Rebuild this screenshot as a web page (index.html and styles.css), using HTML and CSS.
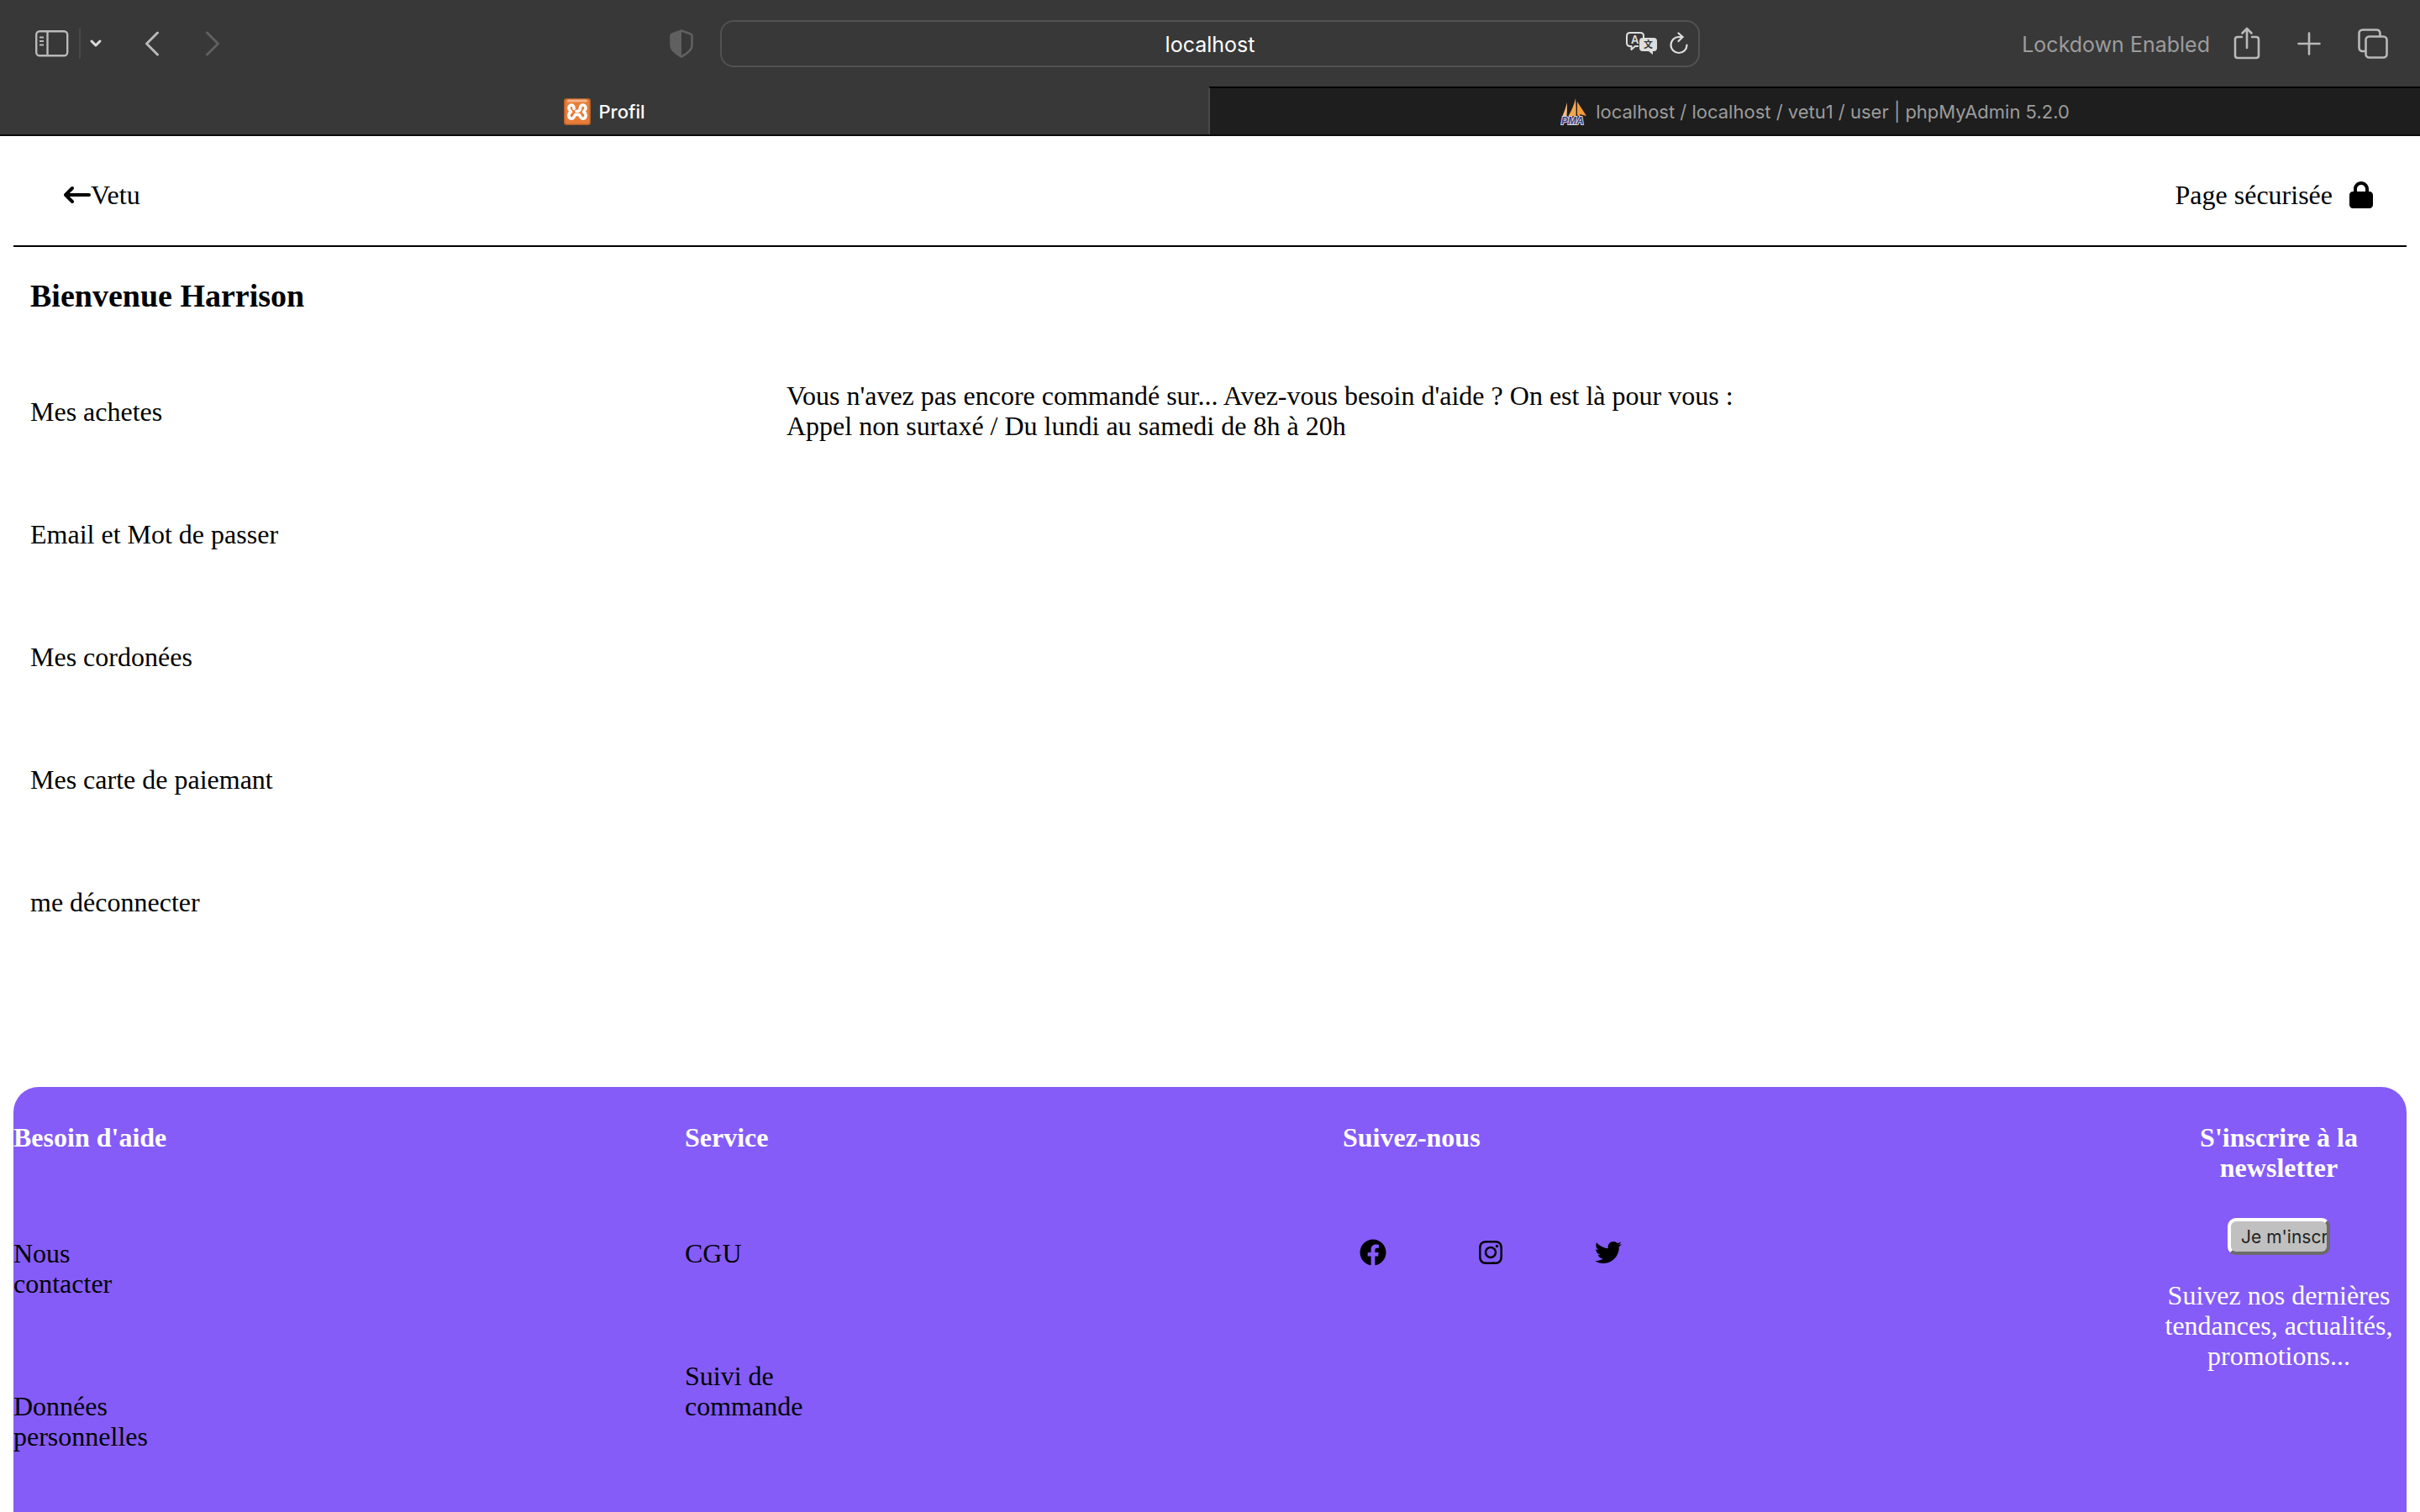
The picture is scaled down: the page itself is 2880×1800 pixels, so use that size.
FILE: index.html
```html
<!DOCTYPE html>
<html lang="fr">
<head>
<meta charset="utf-8">
<title>Profil</title>
<link rel="stylesheet" href="styles.css">
</head>
<body>
<div class="browser">
  <div class="toolbar">
    <div class="tools-left">
      <button class="tool" aria-label="Barre latérale"><svg width="40" height="32" viewBox="0 0 40 32" fill="none" stroke="#b9b9b9" stroke-width="2.4"><rect x="1.2" y="1.2" width="37" height="29" rx="4"/><path d="M14.5 1v30"/><path d="M5 8.500h5M5 13h5M5 17.500h5" stroke-width="2"/></svg></button>
      <span class="divider"></span>
      <button class="tool tool-menu" aria-label="Groupes d'onglets"><svg width="16" height="12" viewBox="0 0 16 12" fill="none" stroke="#dcdcdc" stroke-width="3" stroke-linecap="round" stroke-linejoin="round"><path d="M3 3l5 5 5-5"/></svg></button>
      <button class="tool tool-back" aria-label="Précédent"><svg width="18" height="30" viewBox="0 0 18 30" fill="none" stroke="#b9b9b9" stroke-width="3" stroke-linecap="round" stroke-linejoin="round"><path d="M15.500 2L2.500 15l13 13"/></svg></button>
      <button class="tool tool-next" aria-label="Suivant"><svg width="18" height="30" viewBox="0 0 18 30" fill="none" stroke="#606060" stroke-width="3" stroke-linecap="round" stroke-linejoin="round"><path d="M2.500 2l13 13-13 13"/></svg></button>
      <button class="tool tool-shield" aria-label="Confidentialité"><svg width="28" height="34" viewBox="0 0 28 34"><path d="M14 1.500L3 5.500Q1.500 6 1.500 8v11c0 5 5 9.500 12.500 13.500C21.500 28.500 26.500 24 26.500 19V8q0-2-1.500-2.500z" fill="none" stroke="#606060" stroke-width="2.600" stroke-linejoin="round"/><path d="M14 1L3 5Q1 6 1 8v11c0 5 5 10 13 14z" fill="#606060"/></svg></button>
    </div>
    <div class="address">
      <input class="address-input" type="text" value="localhost" aria-label="Adresse">
      <button class="tool" aria-label="Traduire"><svg width="38" height="28" viewBox="0 0 38 28"><path d="M15 17h-4l-4.500 4v-4H5q-4 0-4-4V5q0-4 4-4h12q4 0 4 4v2" fill="none" stroke="#dedede" stroke-width="2" stroke-linejoin="round"/><path d="M20 7h13q4 0 4 4v8q0 4-4 4h-1v4l-5-4h-7q-4 0-4-4v-8q0-4 4-4z" fill="#dedede"/><text class="glyph-latin" x="6" y="14">A</text><text class="glyph-han" x="21" y="19">文</text></svg></button>
      <button class="tool" aria-label="Actualiser"><svg width="22" height="28" viewBox="0 0 22 28" fill="none" stroke="#dedede" stroke-width="2.200" stroke-linecap="round" stroke-linejoin="round"><path d="M20.500 15.500A9.500 9.500 0 1 1 11 6h4.500"/><path d="M10.500 1.500l5 4.500-5 5"/></svg></button>
    </div>
    <div class="tools-right">
      <span class="lockdown">Lockdown Enabled</span>
      <button class="tool" aria-label="Partager"><svg width="32" height="40" viewBox="0 0 32 40" fill="none" stroke="#b9b9b9" stroke-width="2.600" stroke-linecap="round" stroke-linejoin="round"><path d="M10 12H5q-3 0-3 3v19q0 3 3 3h22q3 0 3-3V15q0-3-3-3h-5"/><path d="M16 25V3M10.500 7.500L16 2l5.500 5.500"/></svg></button>
      <button class="tool" aria-label="Nouvel onglet"><svg width="28" height="28" viewBox="0 0 28 28" fill="none" stroke="#b9b9b9" stroke-width="2.600" stroke-linecap="round"><path d="M14 1.500v25M1.500 14h25"/></svg></button>
      <button class="tool" aria-label="Tous les onglets"><svg width="36" height="36" viewBox="0 0 36 36" fill="none" stroke="#b9b9b9" stroke-width="2.600"><rect x="9.500" y="9.500" width="25" height="25" rx="4"/><path d="M9 27H6q-4.500 0-4.500-4.500V6Q1.500 1.500 6 1.500h16q4.500 0 4.500 4.500v3"/></svg></button>
    </div>
  </div>
  <div class="tabs">
    <a class="tab tab-active" href="#profil">
      <svg width="32" height="32" viewBox="0 0 32 32"><rect width="32" height="32" rx="3" fill="#b4602a"/><rect x="1.500" y="1.500" width="29" height="29" rx="2" fill="#e97d38"/><rect x="4" y="1.500" width="24" height="3" rx="1.500" fill="#f3b48a"/><path d="M12 12.500C12.500 6.500 5.500 7 6 12c.3 2.500 2 3 2.500 4.200C5 18 5 24 9 24.200c3.500 0 3.500-4.200 5-4.700h4c1.500.5 1.500 4.700 5 4.700 4-.2 4-6.200.5-8 .5-1.200 2.200-1.700 2.500-4.200.5-5-6.500-5.500-6.500-.5 0 2.500-1 4-4.500 4" fill="none" stroke="#fff" stroke-width="3.600" stroke-linecap="round" stroke-linejoin="round"/></svg>
      <span>Profil</span>
    </a>
    <a class="tab" href="#phpmyadmin">
      <svg width="32" height="32" viewBox="0 0 32 32"><path d="M8 5Q8 15 7.500 21H2.500Q6 13 8 5z" fill="#f6bd7d"/><path d="M18 0Q19 12 18.500 21H9.500Q16 10 18 0z" fill="#f3a750"/><path d="M20 4L31 21 23 19 24 23 20 20z" fill="#f39a3a"/><text class="glyph-pma" x="1" y="31">PMA</text></svg>
      <span>localhost / localhost / vetu1 / user | phpMyAdmin 5.2.0</span>
    </a>
  </div>
</div>

<div class="page">
  <header class="header">
    <a class="home" href="#vetu"><svg width="32" height="32" viewBox="0 0 512 512"><path d="M9.400 233.400c-12.500 12.500-12.500 32.800 0 45.300l128 128c12.500 12.500 32.800 12.500 45.300 0s12.500-32.800 0-45.300L109.300 288H480c17.700 0 32-14.300 32-32s-14.300-32-32-32H109.300l73.400-73.400c12.500-12.500 12.500-32.800 0-45.300s-32.800-12.500-45.300 0l-128 128z"/></svg>Vetu</a>
    <div class="secure">Page sécurisée<svg width="28" height="32" viewBox="0 0 448 512"><path d="M144 144v48H304V144c0-44.200-35.800-80-80-80s-80 35.800-80 80zM80 192V144C80 64.500 144.500 0 224 0s144 64.500 144 144v48h16c35.300 0 64 28.700 64 64V448c0 35.300-28.700 64-64 64H64c-35.300 0-64-28.700-64-64V256c0-35.300 28.700-64 64-64H80z"/></svg></div>
  </header>

  <main class="main">
    <h2 class="welcome">Bienvenue Harrison</h2>
    <div class="account">
      <nav>
        <ul class="links">
          <li><a href="#achats">Mes achetes</a></li>
          <li><a href="#email">Email et Mot de passer</a></li>
          <li><a href="#coordonnees">Mes cordonées</a></li>
          <li><a href="#cartes">Mes carte de paiemant</a></li>
          <li><a href="#deconnexion">me déconnecter</a></li>
        </ul>
      </nav>
      <p class="notice">Vous n'avez pas encore commandé sur... Avez-vous besoin d'aide ? On est là pour vous : Appel non surtaxé / Du lundi au samedi de 8h à 20h</p>
    </div>
  </main>

  <footer class="footer">
    <section>
      <h4 class="footer-title">Besoin d'aide</h4>
      <ul class="links footer-links">
        <li><a href="#contact">Nous contacter</a></li>
        <li><a href="#donnees">Données personnelles</a></li>
      </ul>
    </section>
    <section>
      <h4 class="footer-title">Service</h4>
      <ul class="links footer-links">
        <li><a href="#cgu">CGU</a></li>
        <li><a href="#suivi">Suivi de commande</a></li>
      </ul>
    </section>
    <section>
      <h4 class="footer-title">Suivez-nous</h4>
      <div class="social">
        <a href="#facebook" aria-label="Facebook"><svg width="32" height="32" viewBox="0 0 512 512"><path d="M504 256C504 119 393 8 256 8S8 119 8 256c0 123.780 90.690 226.380 209.250 245V327.690h-63V256h63v-54.640c0-62.150 37-96.480 93.670-96.480 27.140 0 55.520 4.840 55.520 4.840v61h-31.280c-30.800 0-40.410 19.120-40.410 38.730V256h68.780l-11 71.690h-57.780V501C413.310 482.380 504 379.780 504 256z"/></svg></a>
        <a href="#instagram" aria-label="Instagram"><svg width="28" height="32" viewBox="0 0 448 512"><path d="M224.100 141c-63.600 0-114.900 51.300-114.900 114.900s51.300 114.900 114.900 114.900S339 319.500 339 255.900 287.700 141 224.100 141zm0 189.600c-41.100 0-74.700-33.500-74.700-74.700s33.500-74.700 74.700-74.700 74.700 33.500 74.700 74.700-33.600 74.700-74.700 74.700zm146.400-194.300c0 14.900-12 26.800-26.800 26.800-14.900 0-26.800-12-26.800-26.800s12-26.800 26.800-26.800 26.800 12 26.800 26.800zm76.100 27.200c-1.700-35.900-9.900-67.700-36.200-93.900-26.200-26.200-58-34.400-93.900-36.200-37-2.100-147.900-2.100-184.900 0-35.800 1.700-67.600 9.900-93.900 36.100s-34.400 58-36.200 93.900c-2.100 37-2.100 147.900 0 184.900 1.700 35.900 9.900 67.700 36.200 93.900s58 34.400 93.900 36.200c37 2.100 147.900 2.100 184.900 0 35.900-1.700 67.700-9.900 93.900-36.200 26.200-26.200 34.400-58 36.200-93.900 2.100-37 2.100-147.800 0-184.800zM398.800 388c-7.800 19.600-22.900 34.700-42.600 42.600-29.500 11.700-99.500 9-132.100 9s-102.700 2.600-132.100-9c-19.600-7.800-34.700-22.900-42.600-42.600-11.700-29.500-9-99.500-9-132.100s-2.600-102.700 9-132.100c7.800-19.600 22.900-34.700 42.600-42.600 29.500-11.700 99.500-9 132.100-9s102.700-2.600 132.100 9c19.600 7.800 34.700 22.900 42.600 42.600 11.700 29.500 9 99.500 9 132.100s2.700 102.700-9 132.100z"/></svg></a>
        <a href="#twitter" aria-label="Twitter"><svg width="32" height="32" viewBox="0 0 512 512"><path d="M459.370 151.716c.325 4.548.325 9.097.325 13.645 0 138.720-105.583 298.558-298.558 298.558-59.452 0-114.680-17.219-161.137-47.106 8.447.974 16.568 1.299 25.340 1.299 49.055 0 94.213-16.568 130.274-44.832-46.132-.975-84.792-31.188-98.112-72.772 6.498.974 12.995 1.624 19.818 1.624 9.421 0 18.843-1.300 27.614-3.573-48.081-9.747-84.143-51.980-84.143-102.985v-1.299c13.969 7.797 30.214 12.670 47.431 13.319-28.264-18.843-46.781-51.005-46.781-87.391 0-19.492 5.197-37.360 14.294-52.954 51.655 63.675 129.300 105.258 216.365 109.807-1.624-7.797-2.599-15.918-2.599-24.040 0-57.828 46.782-104.934 104.934-104.934 30.213 0 57.502 12.670 76.670 33.137 23.715-4.548 46.456-13.320 66.599-25.340-7.798 24.366-24.366 44.833-46.132 57.827 21.117-2.273 41.584-8.122 60.426-16.243-14.292 20.791-32.161 39.308-52.628 54.253z"/></svg></a>
      </div>
    </section>
    <section class="newsletter">
      <h4 class="footer-title">S'inscrire à la newsletter</h4>
      <input class="subscribe" type="text" value="Je m'inscrire" aria-label="Newsletter">
      <p class="pitch">Suivez nos dernières tendances, actualités, promotions...</p>
    </section>
  </footer>
</div>
</body>
</html>
```
FILE: styles.css
```css
* {
  box-sizing: border-box;
}

body {
  margin: 0;
  min-height: 100vh;
  display: flex;
  flex-direction: column;
  background: #fff;
  color: #000;
  font: 32px/36px "Liberation Serif", "Times New Roman", serif;
}

h2, h4, p, ul {
  margin: 0;
  padding: 0;
}

svg {
  display: block;
  flex: none;
}

a {
  color: inherit;
  text-decoration: none;
}

/* Browser chrome */
.browser {
  background: #383838;
  border-bottom: 2px solid #0a0a0a;
  font-family: Inter, "Liberation Sans", sans-serif;
}

.toolbar {
  display: grid;
  grid-template-columns: 857fr 1166fr 857fr;
  align-items: center;
  height: 103px;
}

.tool {
  padding: 0;
  border: 0;
  background: none;
}

.tools-left {
  display: flex;
  align-items: center;
  padding: 0 32px 0 42px;
}

.divider {
  width: 2px;
  height: 36px;
  margin: 0 10px 0 12px;
  background: #484848;
}

.tool-back {
  margin-left: 50px;
}

.tool-next {
  margin-left: 54px;
}

.tool-shield {
  margin-left: auto;
}

.address {
  display: flex;
  align-items: center;
  gap: 14px;
  height: 56px;
  padding: 0 12px 0 100px;
  border: 2px solid #525252;
  border-radius: 16px;
}

.address-input {
  flex: 1;
  min-width: 0;
  padding: 2px 0 0;
  border: 0;
  background: none;
  color: #fff;
  font: 25px/32px Inter, "Liberation Sans", sans-serif;
  text-align: center;
}

.glyph-latin {
  fill: #dedede;
  font: 600 13px Inter, sans-serif;
}

.glyph-han {
  fill: #383838;
  font: 700 11px "Noto Sans CJK SC", sans-serif;
}

.glyph-pma {
  fill: #3b3f86;
  stroke: #d8d8e4;
  stroke-width: 2px;
  paint-order: stroke;
  font: italic 700 12px "Liberation Sans", sans-serif;
}

.tools-right {
  display: flex;
  align-items: center;
  justify-content: flex-end;
  gap: 44px;
  padding-right: 38px;
}

.lockdown {
  margin-right: -16px;
  padding-top: 2px;
  color: #9c9c9c;
  font-size: 25px;
}

.tabs {
  display: grid;
  grid-template-columns: 719fr 721fr;
}

.tab {
  display: flex;
  align-items: center;
  justify-content: center;
  gap: 10px;
  height: 57px;
  border-top: 2px solid #000;
  border-left: 2px solid #484848;
  background: #1e1e1e;
  color: #9c9c9c;
  font-size: 22px;
}

.tab-active {
  border-color: #383838;
  border-left: 0;
  background: #383838;
  color: #fff;
  font-weight: 500;
}

/* Page */
.page {
  flex: 1;
  display: flex;
  flex-direction: column;
  padding: 0 16px;
}

.header {
  display: flex;
  justify-content: space-between;
  align-items: center;
  padding: 52px 40px 42px 60px;
  border-bottom: 2px solid #000;
}

.home,
.secure {
  display: flex;
  align-items: center;
  height: 36px;
}

.secure {
  gap: 20px;
}

.main {
  padding: 36px 20px 202px;
}

.welcome {
  font-size: 38px;
  line-height: 44px;
}

.account {
  display: grid;
  grid-template-columns: 900fr 1908fr;
  padding-top: 79px;
}

.links {
  display: flex;
  flex-direction: column;
  gap: 110px;
  padding-top: 19px;
  list-style: none;
}

.notice {
  max-width: 1180px;
}

/* Footer */
.footer {
  flex: 1;
  display: grid;
  grid-template-columns: 799fr 783fr 962fr 304fr;
  padding: 42px 0 60px;
  border-radius: 30px 30px 0 0;
  background: #855cf8;
}

.footer-title {
  color: #fff;
  font-size: 32px;
}

.footer-links {
  width: 160px;
  padding-top: 102px;
}

.social {
  display: flex;
  gap: 110px;
  padding: 103px 20px 0;
}

.newsletter {
  display: flex;
  flex-direction: column;
  align-items: center;
  padding: 0 10px;
  color: #fff;
  text-align: center;
}

.newsletter .footer-title {
  max-width: 220px;
}

.subscribe {
  width: 122px;
  height: 44px;
  margin: 42px 0 30px;
  padding: 0 0 0 12px;
  border: 4px solid;
  border-color: #fff #6b6b6b #6b6b6b #fff;
  border-radius: 10px;
  background: #c0c0c0;
  color: #222;
  font: 21px/28px Inter, "Liberation Sans", sans-serif;
}
```
